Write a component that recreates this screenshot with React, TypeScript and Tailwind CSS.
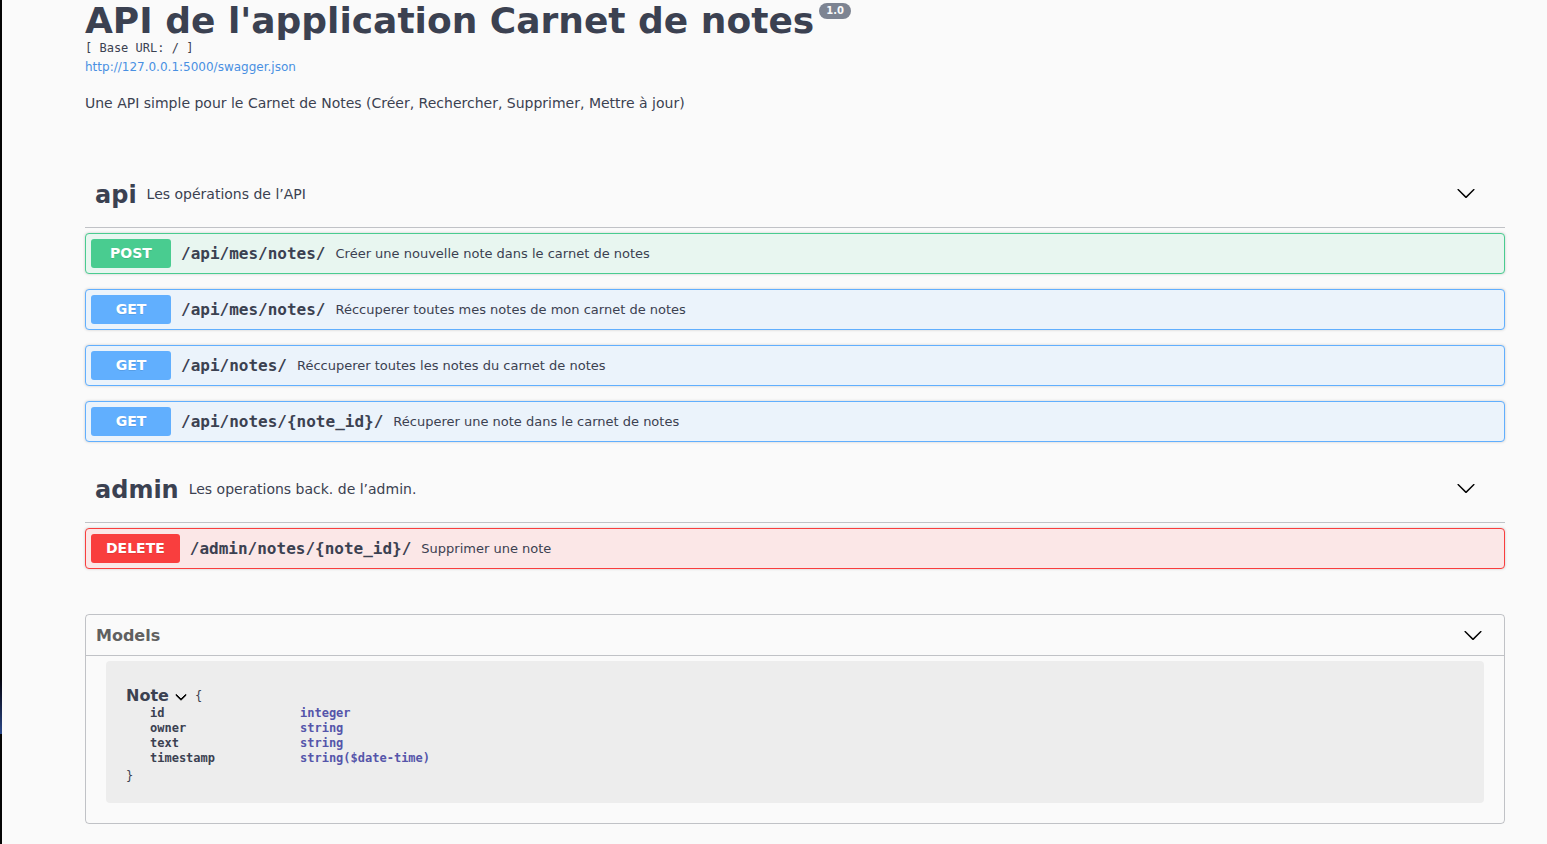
import React from "react";

const SANS = "font-['DejaVu_Sans',sans-serif]";
const MONO = "font-['DejaVu_Sans_Mono',monospace]";

function Arrow({ className }: { className?: string }) {
  return (
    <svg viewBox="0 0 20 20" width="20" height="20" className={className} fill="#000">
      <path d="M17.418 6.109c.272-.268.709-.268.979 0s.271.701 0 .969l-7.908 7.83c-.27.268-.707.268-.979 0l-7.908-7.83c-.27-.268-.27-.701 0-.969.271-.268.709-.268.979 0L10 13.25l7.418-7.141z" />
    </svg>
  );
}

type Op = { method: "POST" | "GET" | "DELETE"; path: string; desc: string };

const styles = {
  POST: { box: "border-[#49cc90] bg-[#e8f6f0]", badge: "bg-[#49cc90]" },
  GET: { box: "border-[#61affe] bg-[#ebf3fb]", badge: "bg-[#61affe]" },
  DELETE: { box: "border-[#f93e3e] bg-[#fbe7e7]", badge: "bg-[#f93e3e]" },
};

function OpBlock({ op }: { op: Op }) {
  const s = styles[op.method];
  return (
    <div
      className={`mb-[15px] flex h-[41px] items-center rounded-[4px] border px-[5px] shadow-[0_0_3px_rgba(0,0,0,0.19)] ${s.box}`}
    >
      <span
        className={`min-w-[80px] rounded-[3px] px-[15px] py-[6px] text-center text-[14px] leading-[17px] font-bold text-white [text-shadow:0_1px_0_rgba(0,0,0,0.1)] ${SANS} ${s.badge}`}
      >
        {op.method}
      </span>
      <span className={`px-[10px] text-[16px] leading-[20px] font-bold text-[#3b4151] ${MONO}`}>{op.path}</span>
      <span className={`text-[13px] leading-[18px] text-[#3b4151] ${SANS}`}>{op.desc}</span>
    </div>
  );
}

function TagHeader({ name, desc }: { name: string; desc: string }) {
  return (
    <div className="mb-[5px] flex h-[66px] items-center border-b border-[rgba(59,65,81,0.3)] pr-[29px] pl-[10px]">
      <span className={`text-[24px] leading-[28px] font-bold text-[#3b4151] ${SANS}`}>{name}</span>
      <span className={`flex-1 px-[10px] text-[14px] leading-[19px] text-[#3b4151] ${SANS}`}>{desc}</span>
      <Arrow className="mb-[4px]" />
    </div>
  );
}

export default function App() {
  const apiOps: Op[] = [
    { method: "POST", path: "/api/mes/notes/", desc: "Créer une nouvelle note dans le carnet de notes" },
    { method: "GET", path: "/api/mes/notes/", desc: "Réccuperer toutes mes notes de mon carnet de notes" },
    { method: "GET", path: "/api/notes/", desc: "Réccuperer toutes les notes du carnet de notes" },
    { method: "GET", path: "/api/notes/{note_id}/", desc: "Récuperer une note dans le carnet de notes" },
  ];
  const adminOps: Op[] = [
    { method: "DELETE", path: "/admin/notes/{note_id}/", desc: "Supprimer une note" },
  ];
  const props = [
    ["id", "integer"],
    ["owner", "string"],
    ["text", "string"],
    ["timestamp", "string($date-time)"],
  ];

  return (
    <div className="flex min-h-[844px] bg-[#fafafa] text-[#3b4151]">
      <div className="flex w-[2px] shrink-0 flex-col bg-[#050505]">
        <div className="h-[680px]" />
        <div className="h-[54px] bg-gradient-to-b from-[#050510] to-[#2c4a8c]" />
      </div>
      <div className="ml-[83px] w-[1420px]">
        {/* Info */}
        <div className="flex items-start">
          <h1 className={`m-0 text-[36px] leading-[42px] font-bold text-[#3b4151] ${SANS}`}>
            API de l'application Carnet de notes
          </h1>
          <span
            className={`mt-[3px] ml-[5px] rounded-[57px] bg-[#7d8492] px-[7px] py-[2px] text-[10px] leading-[12px] font-bold text-[#fafafa] ${SANS}`}
          >
            1.0
          </span>
        </div>
        <div className={`text-[12px] leading-[13px] text-[#3b4151] ${MONO} whitespace-pre`}>[ Base URL: / ]</div>
        <div className={`mt-[4px] text-[12px] leading-[17px] text-[#4990e2] ${SANS}`}>
          http://127.0.0.1:5000/swagger.json
        </div>
        <div className={`mt-[18px] text-[14px] leading-[19px] text-[#3b4151] ${SANS}`}>
          Une API simple pour le Carnet de Notes (Créer, Rechercher, Supprimer, Mettre à jour)
        </div>

        {/* api tag */}
        <div className="mt-[49px]">
          <TagHeader name="api" desc="Les opérations de l’API" />
          {apiOps.map((op, i) => (
            <OpBlock key={i} op={op} />
          ))}
        </div>

        {/* admin tag */}
        <div>
          <TagHeader name="admin" desc="Les operations back. de l’admin." />
          {adminOps.map((op, i) => (
            <OpBlock key={i} op={op} />
          ))}
        </div>

        {/* Models */}
        <div className="mt-[45px] rounded-[4px] border border-[rgba(59,65,81,0.3)]">
          <div className="flex h-[41px] items-center justify-between border-b border-[rgba(59,65,81,0.3)] pr-[21px] pl-[10px]">
            <span className={`text-[16px] leading-[19px] font-bold text-[#606060] ${SANS}`}>Models</span>
            <Arrow />
          </div>
          <div className="px-[20px] pt-[5px] pb-[20px]">
            <div className="h-[142px] rounded-[4px] bg-[rgba(0,0,0,0.05)] pt-[24px] pl-[20px]">
              <div className="flex h-[21px] items-center">
                <span className={`text-[16px] leading-[19px] font-bold text-[#3b4151] ${SANS}`}>Note</span>
                <svg viewBox="0 0 20 20" width="12" height="12" className="mt-[2px] ml-[6px]" fill="#000">
                  <path d="M17.418 6.109c.272-.268.709-.268.979 0s.271.701 0 .969l-7.908 7.83c-.27.268-.707.268-.979 0l-7.908-7.83c-.27-.268-.27-.701 0-.969.271-.268.709-.268.979 0L10 13.25l7.418-7.141z" stroke="#000" strokeWidth="1.6" />
                </svg>
                <span className={`ml-[8px] mt-[2px] text-[12px] leading-[15px] text-[#3b4151] ${MONO}`}>{"{"}</span>
              </div>
              <div className={`text-[12px] leading-[15px] ${MONO}`}>
                {props.map(([k, t]) => (
                  <div key={k} className="flex">
                    <span className="w-[174px] pl-[24px] font-bold text-[#3b4151]">{k}</span>
                    <span className="font-bold text-[#55a]">{t}</span>
                  </div>
                ))}
                <div className="mt-[3px] text-[#3b4151]">{"}"}</div>
              </div>
            </div>
          </div>
        </div>
      </div>
    </div>
  );
}
